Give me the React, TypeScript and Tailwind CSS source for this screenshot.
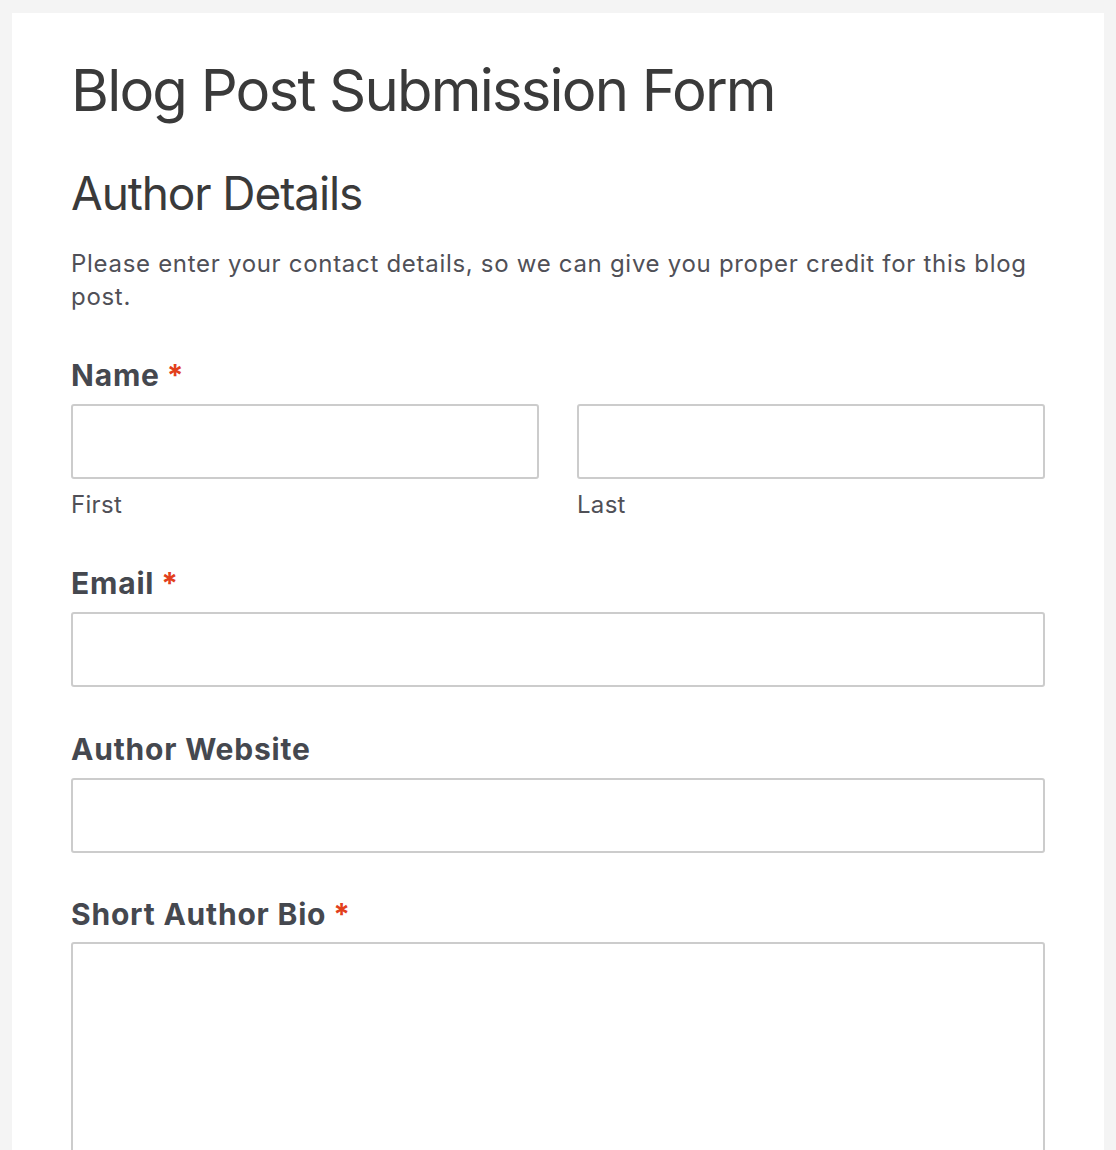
const font = { fontFamily: "Inter, 'Noto Sans', sans-serif" };

const Label = ({ text, required }: { text: string; required?: boolean }) => (
  <div className="text-[30px] font-bold leading-[36px] tracking-[0.8px] text-[#45484f]">
    {text}
    {required && <span className="ml-[7px] text-[#e2401c]">*</span>}
  </div>
);

const Field = ({ className = "" }: { className?: string }) => (
  <div className={`h-[75px] rounded-[3px] border-2 border-[#cccccc] bg-white ${className}`} />
);

export default function App() {
  return (
    <div className="min-h-[1150px] bg-[#f4f4f4] pt-[13px] px-[12px]" style={font}>
      <div className="bg-white px-[59px] pt-[42px] pb-[40px]">
        <h1 className="text-[58px] leading-[70px] font-normal text-[#3a3a3a] tracking-[-1.8px]">
          Blog Post Submission Form
        </h1>
        <h2 className="mt-[40px] text-[46px] leading-[56px] font-normal text-[#3a3a3a] tracking-[-1.1px]">
          Author Details
        </h2>
        <p className="mt-[26px] text-[24px] leading-[33px] text-[#505057] tracking-[0.7px]">
          Please enter your contact details, so we can give you proper credit for this blog post.
        </p>

        <div className="mt-[44px]">
          <Label text="Name" required />
          <div className="mt-[11px] flex gap-[38px]">
            <div className="flex-1">
              <Field />
              <div className="mt-[10px] text-[24px] leading-[32px] tracking-[0.3px] text-[#505057]">First</div>
            </div>
            <div className="flex-1">
              <Field />
              <div className="mt-[10px] text-[24px] leading-[32px] tracking-[0.3px] text-[#505057]">Last</div>
            </div>
          </div>
        </div>

        <div className="mt-[44px]">
          <Label text="Email" required />
          <Field className="mt-[11px]" />
        </div>

        <div className="mt-[44px]">
          <Label text="Author Website" />
          <Field className="mt-[11px]" />
        </div>

        <div className="mt-[43px]">
          <Label text="Short Author Bio" required />
          <div className="mt-[10px] h-[260px] rounded-[3px] border-2 border-[#cccccc] bg-white" />
        </div>
      </div>
    </div>
  );
}
